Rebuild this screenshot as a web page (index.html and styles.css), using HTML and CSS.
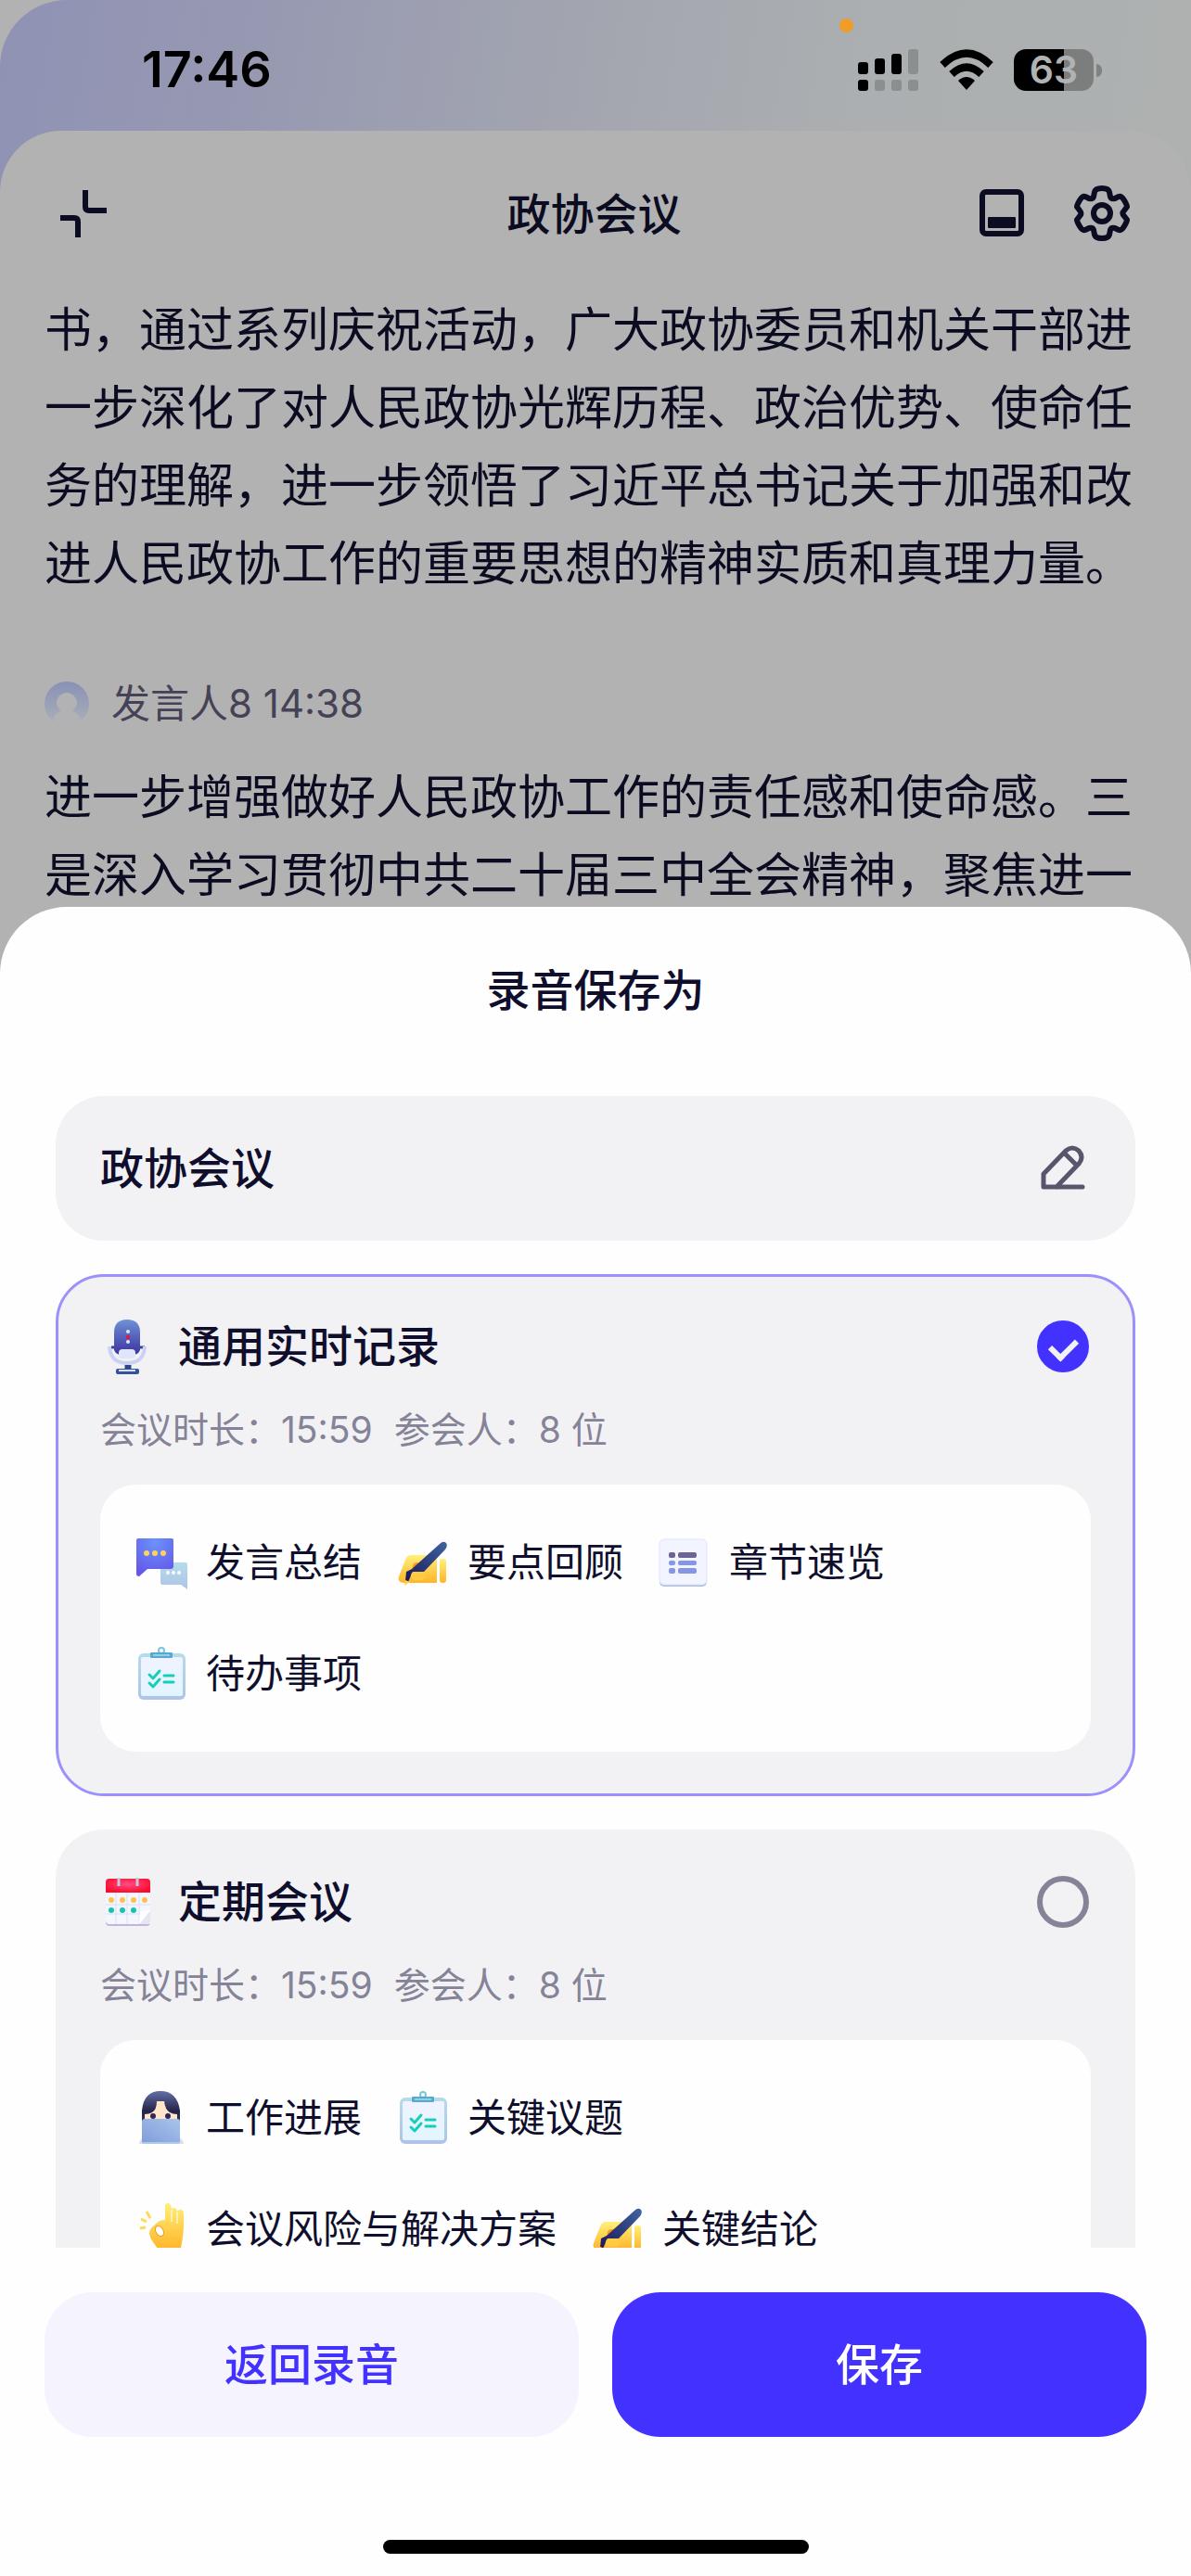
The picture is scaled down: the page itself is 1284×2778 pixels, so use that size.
FILE: index.html
```html
<!DOCTYPE html>
<html lang="zh-CN">
<head>
    <meta charset="UTF-8">
    <meta name="viewport" content="width=device-width, initial-scale=1.0">
    <title>录音保存为</title>
    <link rel="stylesheet" href="styles.css">
</head>
<body>
    <!-- shared icons -->
    <svg class="sprite" aria-hidden="true">
        <defs>
            <linearGradient id="micBody" x1="0" y1="0" x2="0" y2="1">
                <stop offset="0" stop-color="#6f92d6"/>
                <stop offset="1" stop-color="#3a2f9e"/>
            </linearGradient>
            <radialGradient id="chatBlue" cx=".5" cy=".1" r=".9">
                <stop offset="0" stop-color="#6a93fb"/>
                <stop offset="1" stop-color="#6457e8"/>
            </radialGradient>
            <linearGradient id="chatPale" x1="0" y1="0" x2="0" y2="1">
                <stop offset="0" stop-color="#b3dcea"/>
                <stop offset="1" stop-color="#afc3e8"/>
            </linearGradient>
            <linearGradient id="gold" x1="0" y1="0" x2="0" y2="1">
                <stop offset="0" stop-color="#fff07a"/>
                <stop offset="1" stop-color="#ffb428"/>
            </linearGradient>
            <linearGradient id="pen" x1="1" y1="0" x2="0" y2="1">
                <stop offset="0" stop-color="#3f65a0"/>
                <stop offset="1" stop-color="#1c1658"/>
            </linearGradient>
            <linearGradient id="paper" x1="0" y1="0" x2="0" y2="1">
                <stop offset="0" stop-color="#f0f3ff"/>
                <stop offset="1" stop-color="#e2f5ff"/>
            </linearGradient>
            <linearGradient id="hair" x1="0" y1="0" x2="0" y2="1">
                <stop offset="0" stop-color="#6570a8"/>
                <stop offset=".5" stop-color="#252347"/>
                <stop offset="1" stop-color="#3a3f70"/>
            </linearGradient>
            <linearGradient id="laptop" x1="1" y1="0" x2="0" y2="1">
                <stop offset="0" stop-color="#a9c4ec"/>
                <stop offset="1" stop-color="#7f9cd9"/>
            </linearGradient>
            <radialGradient id="calRed" cx=".5" cy=".4" r=".6">
                <stop offset="0" stop-color="#ff4f86"/>
                <stop offset="1" stop-color="#fb0b2d"/>
            </radialGradient>
            <linearGradient id="avatar" x1="0" y1="0" x2="0" y2="1">
                <stop offset="0" stop-color="#8791b5"/>
                <stop offset="1" stop-color="#aeb1b6"/>
            </linearGradient>
        </defs>
        <symbol id="icon-chat" viewBox="0 0 60 60">
            <path d="M31 30h25q2 0 2 2v27l-7-5H31q-2 0-2-3V32q0-2 2-2z" fill="url(#chatPale)"/>
            <path d="M5 4h36q2 0 2 2v28q0 3-3 3H15l-9 8q-3 0-3-3V6q0-2 2-2z" fill="url(#chatBlue)"/>
            <g fill="#ffd45c"><circle cx="14" cy="20" r="3"/><circle cx="23" cy="20" r="3"/><circle cx="32" cy="20" r="3"/></g>
            <g fill="#fff"><circle cx="37" cy="41" r="2"/><circle cx="43" cy="41" r="2"/><circle cx="49" cy="41" r="2"/></g>
        </symbol>
        <symbol id="icon-write" viewBox="0 0 60 60">
            <path d="M17 22h28v30H9q-7-1-5-7l7-18q2-5 6-5z" fill="url(#gold)"/>
            <rect x="48" y="26" width="7" height="26" rx="3" fill="url(#gold)"/>
            <path d="M18 39l1-6q1-3 5-3l6 1-9 10z" fill="#f79b16"/>
            <path d="M48 10q4-4 7-1 2 3-1 7L31 40l-13 2-4 9-3-1 1-10 6-3z" fill="url(#pen)"/>
            <path d="M19 40h12q4 5-2 9h-9q-6-4-1-9z" fill="#ffcb42"/>
            <path d="M11 49l5 2-6 4z" fill="#ffd34a"/>
        </symbol>
        <symbol id="icon-list" viewBox="0 0 60 60">
            <rect x="3" y="6" width="51" height="50" rx="5" fill="#a9bfe3"/>
            <rect x="3" y="5" width="51" height="49" rx="5" fill="#f2f5ff" stroke="#dfe5fc" stroke-width="1"/>
            <g fill="#6c6494"><rect x="13" y="19" width="7" height="6" rx="2"/><rect x="23" y="19" width="20" height="6" rx="2"/></g>
            <g fill="#8696e6"><rect x="13" y="28" width="7" height="5" rx="2"/><rect x="23" y="28" width="20" height="5" rx="2"/><rect x="13" y="36" width="7" height="6" rx="2"/><rect x="23" y="36" width="20" height="6" rx="2"/></g>
        </symbol>
        <symbol id="icon-todo" viewBox="0 0 60 60">
            <rect x="5" y="8" width="51" height="50" rx="6" fill="url(#chatPale)"/>
            <rect x="8" y="12" width="45" height="42" rx="2" fill="url(#paper)"/>
            <circle cx="30" cy="5" r="3" fill="none" stroke="#7cc5dd" stroke-width="2"/>
            <rect x="18" y="7" width="24" height="6" rx="1" fill="#57a9d0"/>
            <path d="M21 10h18" stroke="#8fd0e4" stroke-width="2"/>
            <path d="M17 31l4 4 7-8M17 40l4 4 7-8" fill="none" stroke="#17cfb9" stroke-width="3" stroke-linecap="round" stroke-linejoin="round"/>
            <path d="M33 32h10M33 39h10" stroke="#17cfb9" stroke-width="3" stroke-linecap="round"/>
        </symbol>
        <symbol id="icon-worker" viewBox="0 0 60 60">
            <path d="M9 44V22Q11 1 29 1t21 21v22z" fill="url(#hair)"/>
            <path d="M25 12h8q1 9 6 12 3 2 8 2v7H12v-7q5 0 8-2 5-3 5-12z" fill="#ffe6ca"/>
            <circle cx="21" cy="28" r="3" fill="#352556"/>
            <circle cx="37" cy="28" r="3" fill="#352556"/>
            <path d="M6 58q1-6 5-6h38q4 0 5 6z" fill="#dcdcf3"/>
            <rect x="9" y="31" width="41" height="27" rx="3" fill="url(#laptop)"/>
            <path d="M10 57h39" stroke="#a8cbec" stroke-width="2"/>
        </symbol>
        <symbol id="icon-ok" viewBox="0 0 60 60">
            <path d="M34 20V4q3-5 6 0l1 4q4-3 6 2 6-3 7 2 1 20-3 38l-1 3H27q-2-4-6-9-4-6-4-10 0-4 5-8 6-7 12-6z" fill="url(#gold)"/>
            <path d="M41 9v13M47 11v13" stroke="#fefefe" stroke-width="1"/>
            <ellipse cx="28" cy="32" rx="4" ry="6" fill="#fff" stroke="#f79b16" stroke-width="1" transform="rotate(-30 28 32)"/>
            <path d="M14 11l4 7M8 19l6 3M7 29l6-1" stroke="#ffd957" stroke-width="3"/>
        </symbol>
    </svg>

    <div class="page">
        <div class="status-bar">
            <span class="mic-dot"></span>
            <span class="time">17:46</span>
            <div class="status-icons">
                <svg width="66" height="46" viewBox="0 0 66 46">
                    <g><rect y="14" width="11" height="13" rx="3"/><rect x="18" y="10" width="11" height="17" rx="3"/><rect x="36" y="5" width="11" height="22" rx="3"/><rect y="33" width="11" height="12" rx="3"/></g>
                    <g fill="#8b8f90"><rect x="54" width="11" height="27" rx="3"/><rect x="18" y="33" width="11" height="12" rx="3"/><rect x="36" y="33" width="11" height="12" rx="3"/><rect x="54" y="33" width="11" height="12" rx="3"/></g>
                </svg>
                <svg width="58" height="46" viewBox="0 0 58 46">
                    <path d="M3 17Q29-8 55 17" fill="none" stroke="#000" stroke-width="8"/>
                    <path d="M13 27Q29 12 45 27" fill="none" stroke="#000" stroke-width="8"/>
                    <path d="M20 34q9-8 18 0l-9 10z"/>
                </svg>
                <div class="battery"><span>63</span></div>
            </div>
        </div>

        <div class="record">
            <header class="record-header">
                <button class="icon-button" aria-label="收起">
                    <svg width="60" height="66" viewBox="0 0 60 66"><path d="M32 7v18q0 4 4 4h19M5 37h15q4 0 4 4v17" fill="none" stroke="#0b0b22" stroke-width="6"/></svg>
                </button>
                <h1>政协会议</h1>
                <div class="header-actions">
                    <button class="icon-button" aria-label="面板">
                        <svg width="60" height="66" viewBox="0 0 60 66"><rect x="9" y="9" width="42" height="45" rx="4" fill="none" stroke="#0b0b22" stroke-width="6"/><rect x="15" y="36" width="30" height="12" rx="1" fill="#0b0b22"/></svg>
                    </button>
                    <button class="icon-button" aria-label="设置">
                        <svg width="66" height="66" viewBox="0 0 66 66"><path d="M25 9q1-4 8-4t8 4l1 5q1 3 5 2l4-2q3-1 6 4t3 7l-3 4q-3 3 0 6l3 4q0 2-3 7t-6 4l-4-2q-4-1-5 2l-1 5q-1 4-8 4t-8-4l-1-5q-1-3-5-2l-4 2q-3 1-6-4t-3-7l3-4q3-3 0-6l-3-4q0-2 3-7t6-4l4 2q4 1 5-2z" fill="none" stroke="#0b0b22" stroke-width="6" stroke-linejoin="round"/><circle cx="33" cy="32" r="9" fill="none" stroke="#0b0b22" stroke-width="6"/></svg>
                    </button>
                </div>
            </header>
            <main class="transcript">
                <p>书，通过系列庆祝活动，广大政协委员和机关干部进一步深化了对人民政协光辉历程、政治优势、使命任务的理解，进一步领悟了习近平总书记关于加强和改进人民政协工作的重要思想的精神实质和真理力量。</p>
                <div class="speaker">
                    <svg width="48" height="48" viewBox="0 0 48 48"><circle cx="24" cy="24" r="24" fill="url(#avatar)"/><path d="M24 12c6 0 11 5 11 11 0 4-3 7-5 9 5 1 8 5 9 10q-6 6-15 6T9 42c1-5 4-9 9-10-2-2-5-5-5-9 0-6 5-11 11-11z" fill="#b2b2b4"/></svg>
                    <span>发言人8 14:38</span>
                </div>
                <p>进一步增强做好人民政协工作的责任感和使命感。三是深入学习贯彻中共二十届三中全会精神，聚焦进一</p>
            </main>
        </div>
    </div>

    <form class="sheet">
        <h2>录音保存为</h2>
        <div class="sheet-body">
            <label class="name-field">
                <input type="text" value="政协会议" aria-label="录音名称">
                <svg width="60" height="60" viewBox="0 0 60 60"><path d="M9 50V36L33 11q7-6 14 0 6 7 0 14L23 50M31 13l14 14M9 50h42" fill="none" stroke="#58566d" stroke-width="5" stroke-linecap="round" stroke-linejoin="round"/></svg>
            </label>

            <label class="card">
                <div class="card-title">
                    <svg class="icon" viewBox="0 0 60 60">
                        <path d="M12 31h36" stroke="#33488f" stroke-width="3"/>
                        <path d="M15 15Q15 1 29 1t14 14v19q-2 6-14 6t-14-6z" fill="url(#micBody)"/>
                        <rect x="20" y="33" width="18" height="10" rx="4" fill="#dfe5fb"/>
                        <path d="M10 30q1 18 19 18t19-18" fill="none" stroke="#c9d2f5" stroke-width="4"/>
                        <path d="M30 50v5" stroke="#2d4a86" stroke-width="7"/>
                        <rect x="17" y="54" width="25" height="6" rx="2" fill="#34539a"/>
                        <path d="M20 56h18" stroke="#d5e2fa" stroke-width="2"/>
                        <circle cx="30" cy="14" r="2" fill="#dfe5fb"/><circle cx="30" cy="20" r="2" fill="#fb0b2d"/><circle cx="30" cy="25" r="2" fill="#dfe5fb"/>
                    </svg>
                    <h3>通用实时记录</h3>
                    <input type="radio" name="template" checked>
                </div>
                <p class="meta"><span>会议时长：15:59</span><span>参会人：8 位</span></p>
                <ul class="tags">
                    <li><svg class="icon"><use href="#icon-chat"/></svg>发言总结</li>
                    <li><svg class="icon"><use href="#icon-write"/></svg>要点回顾</li>
                    <li><svg class="icon"><use href="#icon-list"/></svg>章节速览</li>
                    <li><svg class="icon"><use href="#icon-todo"/></svg>待办事项</li>
                </ul>
            </label>

            <label class="card">
                <div class="card-title">
                    <svg class="icon" viewBox="0 0 60 60">
                        <rect x="6" y="5" width="48" height="51" rx="4" fill="#c5b3dc"/>
                        <rect x="6" y="5" width="48" height="49" rx="4" fill="#f4f6ff"/>
                        <path d="M17 20v34M29 20v34M42 20v34M6 33h48M6 43h48" stroke="#d8def5" stroke-width="1"/>
                        <path d="M6 20V9q0-4 4-4h40q4 0 4 4v11z" fill="url(#calRed)"/>
                        <path d="M20 4v9M40 4v9" stroke="#c9c5dc" stroke-width="3"/>
                        <g fill="#ffc04d"><circle cx="12" cy="28" r="3"/><circle cx="24" cy="28" r="3"/><circle cx="36" cy="28" r="3"/><circle cx="48" cy="28" r="3"/></g>
                        <g fill="#17c3ac"><circle cx="12" cy="39" r="3"/><circle cx="24" cy="39" r="3"/><circle cx="36" cy="39" r="3"/></g>
                        <path d="M54 40v14H42z" fill="#e6e6f3"/><path d="M54 39L42 54l1-14z" fill="#fff"/>
                    </svg>
                    <h3>定期会议</h3>
                    <input type="radio" name="template">
                </div>
                <p class="meta"><span>会议时长：15:59</span><span>参会人：8 位</span></p>
                <ul class="tags">
                    <li><svg class="icon"><use href="#icon-worker"/></svg>工作进展</li>
                    <li><svg class="icon"><use href="#icon-todo"/></svg>关键议题</li>
                    <li><svg class="icon"><use href="#icon-ok"/></svg>会议风险与解决方案</li>
                    <li><svg class="icon"><use href="#icon-write"/></svg>关键结论</li>
                </ul>
            </label>
        </div>
        <div class="actions">
            <button type="button" class="secondary">返回录音</button>
            <button type="button" class="primary">保存</button>
        </div>
        <div class="home-indicator"></div>
    </form>
</body>
</html>
```
FILE: styles.css
```css
* {
    box-sizing: border-box;
    margin: 0;
    padding: 0;
}
body {
    font-family: Inter, 'Noto Sans CJK SC', sans-serif;
    line-height: 1.2;
    background: #b2b2b2;
    color: #0f0f2d;
    height: 100vh;
    overflow: hidden;
}
h1, h2, h3 {
    font-size: 47px;
    font-weight: 500;
    line-height: 60px;
}
button {
    font: inherit;
    border: none;
    background: none;
    cursor: pointer;
}
svg {
    display: block;
    flex: none;
}
.sprite {
    position: absolute;
    width: 0;
    height: 0;
}
.icon {
    width: 60px;
    height: 60px;
}

/* dimmed page behind the sheet */
.page {
    border-top-left-radius: 72px;
    background: linear-gradient(100deg, #8f92b4 0, #9799b2 20%, #a3a6af 45%, #abafb1 65%, #aeb1b0 90%, #b2b1af 100%);
    color: #0b0b22;
}
.status-bar {
    position: relative;
    display: flex;
    justify-content: space-between;
    align-items: center;
    height: 141px;
    padding: 10px 96px 0 153px;
    color: #000;
}
.time {
    font-size: 54px;
    font-weight: 600;
}
.mic-dot {
    position: absolute;
    top: 20px;
    right: 364px;
    width: 15px;
    height: 15px;
    border-radius: 50%;
    background: #f09c26;
}
.status-icons {
    display: flex;
    align-items: center;
    gap: 22px;
}
.battery {
    position: relative;
    width: 86px;
    height: 45px;
    margin-right: 9px;
    border-radius: 13px;
    background: linear-gradient(90deg, #000 63%, #7c7e7e 63%);
    color: #b0b3b3;
    font-size: 41px;
    font-weight: 600;
    line-height: 45px;
    text-align: center;
}
.battery::after {
    content: "";
    position: absolute;
    right: -9px;
    top: 16px;
    width: 6px;
    height: 14px;
    border-radius: 0 6px 6px 0;
    background: #7f8281;
}
.record {
    border-radius: 66px 66px 0 0;
    background: #b2b2b2;
}
.record-header {
    display: grid;
    grid-template-columns: 1fr auto 1fr;
    align-items: center;
    height: 173px;
    padding: 6px 63px 0 60px;
}
.icon-button {
    justify-self: start;
}
.header-actions {
    display: flex;
    justify-content: flex-end;
    gap: 45px;
}
.transcript {
    padding: 0 48px;
}
.transcript p {
    font-size: 51px;
    line-height: 84px;
}
.speaker {
    display: flex;
    align-items: center;
    gap: 24px;
    height: 48px;
    margin: 85px 0 35px;
    color: #454256;
    font-size: 42px;
}

/* save sheet */
.sheet {
    position: fixed;
    inset: 978px 0 0;
    display: flex;
    flex-direction: column;
    border-radius: 72px 72px 0 0;
    background: #fefefe;
}
.sheet h2 {
    padding: 60px 0 84px;
    text-align: center;
}
.sheet-body {
    flex: 1;
    min-height: 0;
    overflow-y: auto;
    scrollbar-width: none;
    padding: 0 60px;
}
.name-field {
    display: flex;
    align-items: center;
    height: 156px;
    padding: 0 48px;
    border-radius: 52px;
    background: #f2f2f4;
}
.name-field input {
    flex: 1;
    min-width: 0;
    height: 60px;
    border: none;
    outline: none;
    background: none;
    color: inherit;
    font: inherit;
    font-size: 47px;
    font-weight: 500;
    line-height: 60px;
}
.card {
    display: block;
    margin-top: 36px;
    padding: 45px;
    border: 3px solid #f2f2f4;
    border-radius: 52px;
    background: #f2f2f4;
}
.card:has(:checked) {
    border-color: #9b91fc;
}
.card-title {
    display: flex;
    align-items: center;
    gap: 24px;
}
.card-title h3 {
    flex: 1;
}
.card-title input {
    appearance: none;
    display: flex;
    justify-content: center;
    width: 56px;
    height: 56px;
    margin-right: 2px;
    border: 6px solid #858397;
    border-radius: 50%;
}
.card-title input:checked {
    border-color: #4332ff;
    background: #4332ff;
}
.card-title input:checked::after {
    content: "";
    width: 13px;
    height: 22px;
    margin-top: 8px;
    border: solid #f2f2f4;
    border-width: 0 6px 6px 0;
    rotate: 45deg;
}
.meta {
    display: flex;
    gap: 23px;
    margin: 30px 0 29px;
    color: #858397;
    font-size: 39px;
    line-height: 60px;
}
.tags {
    display: flex;
    flex-wrap: wrap;
    gap: 0 36px;
    padding: 24px 36px;
    border-radius: 38px;
    background: #fefefe;
    list-style: none;
}
.tags li {
    display: flex;
    align-items: center;
    gap: 18px;
    height: 120px;
    font-size: 42px;
    line-height: 60px;
}
.actions {
    display: flex;
    gap: 36px;
    padding: 48px 48px 111px;
}
.actions button {
    flex: 1;
    height: 156px;
    border-radius: 52px;
    font-size: 47px;
    font-weight: 500;
    line-height: 60px;
}
.actions .secondary {
    background: #f5f3fe;
    color: #4332ff;
}
.actions .primary {
    background: #4332ff;
    color: #fff;
}
.home-indicator {
    width: 459px;
    height: 15px;
    margin: 0 auto 24px;
    border-radius: 8px;
    background: #000;
}
```
